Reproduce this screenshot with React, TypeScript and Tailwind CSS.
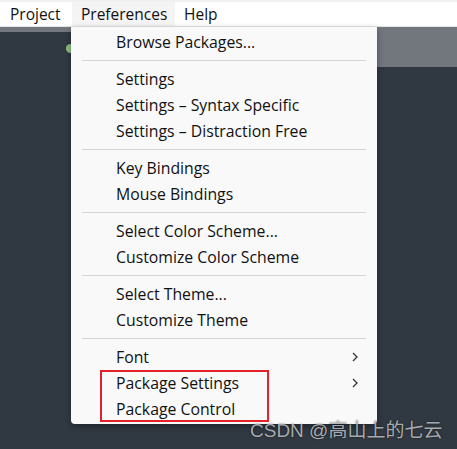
import React from 'react';

type Row = { label: string; sub?: boolean };

const GROUPS: Row[][] = [
  [{ label: 'Browse Packages...' }],
  [{ label: 'Settings' }, { label: 'Settings – Syntax Specific' }, { label: 'Settings – Distraction Free' }],
  [{ label: 'Key Bindings' }, { label: 'Mouse Bindings' }],
  [{ label: 'Select Color Scheme...' }, { label: 'Customize Color Scheme' }],
  [{ label: 'Select Theme...' }, { label: 'Customize Theme' }],
];

function Chevron() {
  return (
    <svg width="6" height="10" viewBox="0 0 6 10" className="ml-auto mr-[19px] -mt-[2px]">
      <path d="M1 1l4 4-4 4" fill="none" stroke="#333" strokeWidth="1.3" />
    </svg>
  );
}

function MenuRow({ label, sub }: Row) {
  return (
    <div className="h-[26px] flex items-center pl-[45px] pt-[2px]">
      {label}
      {sub && <Chevron />}
    </div>
  );
}

function Separator() {
  return (
    <div className="h-[11px] flex items-center px-[11px]">
      <div className="h-px w-full bg-[#d4d4d4]" />
    </div>
  );
}

export default function App() {
  return (
    <div className="relative w-[457px] h-[449px] overflow-hidden bg-[#303841] font-['Segoe_UI','Open_Sans',sans-serif]">
      {/* Menu bar */}
      <div className="flex h-[27px] items-stretch bg-white border-t-2 border-[#f0f0f0] border-b border-b-[#e6e6e6] text-[15.5px] text-[#111]">
        <div className="flex items-center w-[72px] pl-[10px] pt-[1px]">Project</div>
        <div className="flex items-center w-[103px] pl-[9px] pt-[1px] bg-[#f4f4f4]">Preferences</div>
        <div className="flex items-center pl-[9px] pt-[1px]">Help</div>
      </div>

      {/* Tab bar */}
      <div className="h-[40px] bg-[#72767d] flex">
        <div className="w-[120px] mt-[5px] bg-[#303841] flex items-start">
          <span className="ml-[66px] mt-[12px] w-[9px] h-[9px] rounded-full bg-[#8cbf7e]" />
        </div>
      </div>

      {/* Dropdown menu */}
      <div className="absolute left-[71px] top-[27px] w-[306px] bg-[#f9f9f9] rounded-b-[4px] shadow-[0_2px_6px_rgba(0,0,0,0.35)] py-[2px] text-[15.8px] text-[#111]">
        {GROUPS.map((g, i) => (
          <React.Fragment key={i}>
            {g.map((r) => (
              <MenuRow key={r.label} {...r} />
            ))}
            <Separator />
          </React.Fragment>
        ))}
        <MenuRow label="Font" sub />
        <div className="relative">
          <MenuRow label="Package Settings" sub />
          <MenuRow label="Package Control" />
          <div className="absolute inset-y-0 left-[29px] w-[169px] border-2 border-[#e3202b]" />
        </div>
      </div>

      {/* Watermark */}
      <div className="absolute left-[250px] top-[419px] text-[19px] leading-[24px] text-[#b9bcc0]/90 font-['Liberation_Sans','Noto_Sans_CJK_SC',sans-serif] [text-shadow:0_0_2px_rgba(0,0,0,0.6)]">
        CSDN @高山上的七云
      </div>
    </div>
  );
}
